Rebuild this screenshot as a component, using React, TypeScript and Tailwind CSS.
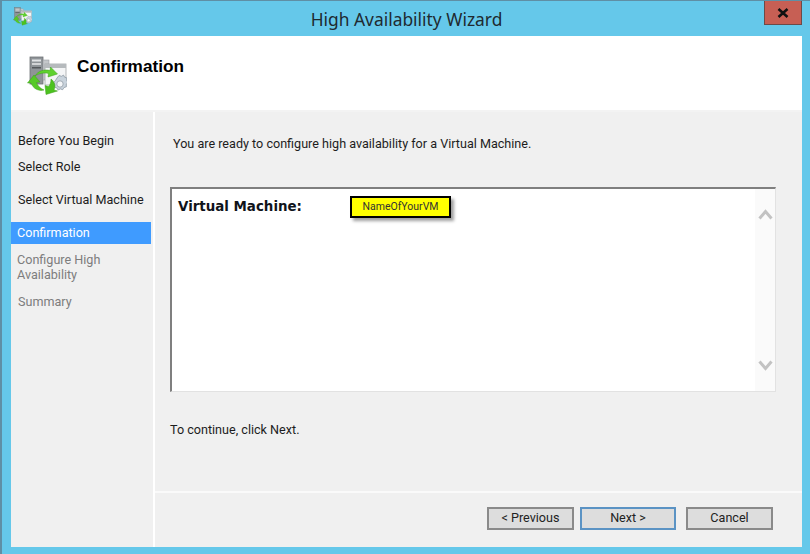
// small drawing of the clustered server icon, used in title bar and header
function WizardIcon({ size }: { size: number }) {
  return (
    <svg width={size} height={size} viewBox="0 0 40 40" className="shrink-0">
      <rect x="3" y="1" width="13" height="27" fill="#8f9498" stroke="#6e7276" strokeWidth="0.8" />
      <rect x="5" y="3.500" width="9" height="2" fill="#e2e4e6" />
      <rect x="5" y="7" width="9" height="2" fill="#d2d4d6" />
      <rect x="5" y="11" width="9" height="1.500" fill="#55595c" />
      <rect x="16" y="4" width="6" height="20" fill="#c4c7ca" stroke="#9a9da0" strokeWidth="0.6" />
      <rect x="18" y="8" width="21" height="21" fill="#f4f5f6" stroke="#a2a5a8" strokeWidth="0.8" />
      <rect x="18" y="8" width="21" height="4" fill="#b6babd" />
      <path
        d="M30 22l2-2.500 2.500.8 2-1.200 1.200 2.200 2.300.7-.3 2.500 1.300 2-1.800 1.800.2 2.500-2.400.7-1.300 2.200-2.400-.8-2.200 1.100-1.300-2.100-2.400-.8.3-2.500-1.200-2.100 1.800-1.700z"
        fill="#c9d3dc"
        stroke="#8f9aa5"
        strokeWidth="0.8"
      />
      <circle cx="33" cy="28" r="3.200" fill="#f4f6f8" stroke="#8f9aa5" strokeWidth="0.8" />
      <path d="M8 20c3-5 9-7 15-5.500l.5-3.500 7 7-9.500 3 .5-3.500c-4-1-9-.5-13.500 2.500z" fill="#5fd12e" stroke="#3f9e1c" strokeWidth="0.5" />
      <path d="M0.500 27l6.500-8 6 7-3.500.5c1 3 3.500 6 7.500 7.500-5.500 1.500-11-1.500-13-7z" fill="#56c926" stroke="#3f9e1c" strokeWidth="0.5" />
      <path d="M19 38.500l-1-9 3.500 1c1.500-1.500 2.500-4 2.500-7.500 3.500 2.500 5 7 3 11l3.500 1z" fill="#4cc21f" stroke="#3f9e1c" strokeWidth="0.5" />
    </svg>
  )
}

function Button({ label, active }: { label: string; active?: boolean }) {
  return (
    <button
      className={`h-[23px] border-2 bg-[#dddddd] text-[12.600px] leading-none text-[#222] ${
        active ? 'w-[96px] border-[#5b93c4]' : 'w-[87px] border-[#8a8a8a]'
      }`}
    >
      {label}
    </button>
  )
}

export default function App() {
  return (
    <div
      className="flex h-[554px] w-[810px] flex-col overflow-hidden border-l-2 border-t border-[#5f8fa5] bg-[#65c8ea] pb-[7px] pl-[9px] pr-[8px]"
      style={{ fontFamily: 'Roboto, "Liberation Sans", sans-serif' }}
    >
      {/* Title bar */}
      <div className="relative flex h-[35px] shrink-0 items-center justify-center">
        <div className="absolute left-[2px] top-[6px]">
          <WizardIcon size={19} />
        </div>
        <span
          className="pt-px text-[17.400px] text-[#1f2a30]"
          style={{ fontFamily: '"Noto Sans", sans-serif' }}
        >
          High Availability Wizard
        </span>
        <div className="absolute right-0 top-[-1px] flex h-[25px] w-[38px] items-center justify-center border border-[#6d4a48] bg-[#c75f54]">
          <svg width="12" height="10" viewBox="0 0 12 10">
            <path d="M1.500 1l9 8M10.500 1l-9 8" stroke="#111" strokeWidth="2.600" />
          </svg>
        </div>
      </div>

      {/* Header */}
      <div className="flex h-[76px] shrink-0 border-b-2 border-[#f3f3f3] bg-white pl-[16px] pt-[20px]">
        <WizardIcon size={40} />
        <h1
          className="ml-[10px] mt-[2px] text-[17.200px] font-bold leading-none text-black"
          style={{ fontFamily: '"Liberation Sans", sans-serif' }}
        >
          Confirmation
        </h1>
      </div>

      <div className="flex min-h-0 flex-1 bg-[#f0f0f0]">
        {/* Step list */}
        <nav className="flex w-[142px] shrink-0 flex-col whitespace-nowrap pt-[20px] text-[12.600px] leading-[18px] text-[#1d1d1d]">
          <div className="px-[7px]">Before You Begin</div>
          <div className="mt-[8px] px-[7px]">Select Role</div>
          <div className="mt-[15px] px-[7px]">Select Virtual Machine</div>
          <div className="mt-[13px] flex h-[22px] w-[140px] items-center bg-[#3f9bff] px-[6px] text-white">
            Confirmation
          </div>
          <div className="mt-[8px] px-[6px] leading-[15px] text-[#7d7d7d]">
            Configure High
            <br />
            Availability
          </div>
          <div className="mt-[11px] px-[7px] text-[#7d7d7d]">Summary</div>
        </nav>

        <div className="w-[2px] shrink-0 bg-white" />

        {/* Main pane */}
        <main className="flex min-w-0 flex-1 flex-col">
          <div className="flex min-h-0 flex-1 flex-col pl-[15px] pr-[26px]">
            <p className="ml-[3px] mt-[23px] text-[12.600px] leading-[18px] text-[#1d1d1d]">
              You are ready to configure high availability for a Virtual Machine.
            </p>

            <div className="mt-[34px] flex h-[205px] border-2 border-b border-r border-[#7f7f7f] border-b-[#e2e2e2] border-r-[#e2e2e2] bg-white">
              <div className="relative min-w-0 flex-1 pl-[6px] pt-[5px]">
                <span
                  className="text-[13.400px] font-bold leading-[17px] text-[#10131a]"
                  style={{ fontFamily: '"DejaVu Sans", sans-serif' }}
                >
                  Virtual Machine:
                </span>
                <div className="absolute left-[178px] top-[7px] flex h-[22px] w-[101px] items-center justify-center border-2 border-black bg-[#ffff00] text-[10.500px] text-[#333] shadow-[3px_3px_3px_#a0a0a0]">
                  NameOfYourVM
                </div>
              </div>
              <div className="flex w-[20px] shrink-0 flex-col items-center justify-between bg-[#fafafa] pb-[20px] pt-[20px]">
                <svg width="15" height="11" viewBox="0 0 15 11">
                  <path d="M1.500 9.500L7.500 2.500l6 7" fill="none" stroke="#c2c2c2" strokeWidth="3" />
                </svg>
                <svg width="15" height="11" viewBox="0 0 15 11">
                  <path d="M1.500 1.500l6 7 6-7" fill="none" stroke="#c2c2c2" strokeWidth="3" />
                </svg>
              </div>
            </div>

            <p className="mt-[29px] text-[12.600px] leading-[18px] text-[#1d1d1d]">To continue, click Next.</p>
          </div>

          {/* Footer buttons */}
          <div className="flex h-[56px] shrink-0 justify-end border-t-2 border-[#fafafa] pr-[29px] pt-[14px]">
            <Button label="< Previous" />
            <div className="w-[6px]" />
            <Button label="Next >" active />
            <div className="w-[10px]" />
            <Button label="Cancel" />
          </div>
        </main>
      </div>
    </div>
  )
}
